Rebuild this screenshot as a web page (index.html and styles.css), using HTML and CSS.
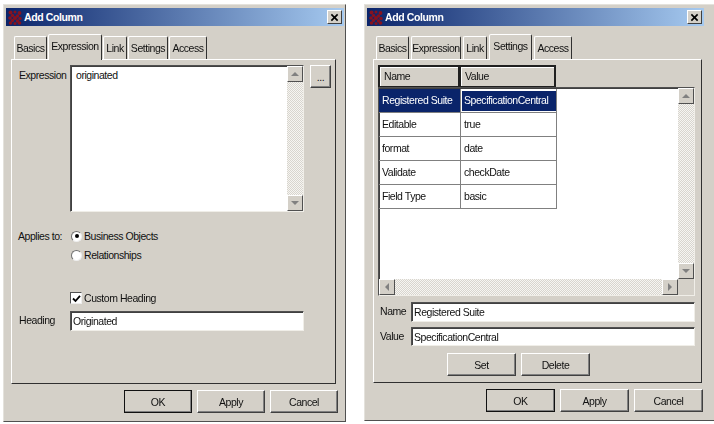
FILE: index.html
```html
<!DOCTYPE html>
<html lang="en">
<head>
<meta charset="utf-8">
<title>Add Column</title>
<link rel="stylesheet" href="styles.css">
</head>
<body>
<main class="desktop">
  <section class="window window-a">
    <header class="titlebar">
      <svg class="app-icon" viewBox="0 0 14 15"><g fill="#86121f"><circle cx="2.5" cy="2.5" r="2"/><circle cx="7" cy="2" r="1.5"/><circle cx="11.5" cy="3" r="1.9"/><circle cx="4.5" cy="5.5" r="1.7"/><circle cx="9.5" cy="6" r="1.7"/><circle cx="2" cy="8" r="1.8"/><circle cx="7" cy="8" r="2"/><circle cx="12" cy="8.5" r="1.7"/><circle cx="4.5" cy="10.5" r="1.7"/><circle cx="9.5" cy="11" r="1.7"/><circle cx="2.5" cy="13" r="1.8"/><circle cx="7" cy="13.5" r="1.5"/><circle cx="11.5" cy="13" r="1.8"/></g></svg>
      <span class="title-text">Add Column</span>
      <button class="close" aria-label="Close"><svg viewBox="0 0 10 9"><path d="M1.5 1l7 7M8.5 1l-7 7" stroke="#000" stroke-width="1.8" fill="none"/></svg></button>
    </header>
    <nav class="tabs">
      <span class="tab t-basics">Basics</span>
      <span class="tab t-expression active">Expression</span>
      <span class="tab t-link">Link</span>
      <span class="tab t-settings">Settings</span>
      <span class="tab t-access">Access</span>
    </nav>
    <div class="panel panel-expression">
      <div class="row expr-row">
        <label class="field-label">Expression</label>
        <div class="sunken textarea">
          <div class="area-text">originated</div>
          <div class="vscroll">
            <span class="sb-btn"><i class="arrow up"></i></span>
            <span class="track"></span>
            <span class="sb-btn"><i class="arrow down"></i></span>
          </div>
        </div>
        <button class="btn dots">...</button>
      </div>
      <div class="row applies-row">
        <span class="field-label">Applies to:</span>
        <div class="radios">
          <div class="option"><span class="radio checked"></span>Business Objects</div>
          <div class="option"><span class="radio"></span>Relationships</div>
        </div>
      </div>
      <div class="row custom-row">
        <span class="field-label"></span>
        <div class="option"><span class="check"><svg viewBox="0 0 9 9"><path d="M1 4.5l2.5 2.5L8 1.8" stroke="#000" stroke-width="1.8" fill="none"/></svg></span>Custom Heading</div>
      </div>
      <div class="row heading-row">
        <span class="field-label">Heading</span>
        <div class="sunken input heading-input">Originated</div>
      </div>
    </div>
    <footer class="actions">
      <button class="btn action default">OK</button>
      <button class="btn action">Apply</button>
      <button class="btn action">Cancel</button>
    </footer>
  </section>

  <section class="window window-b">
    <header class="titlebar">
      <svg class="app-icon" viewBox="0 0 14 15"><g fill="#86121f"><circle cx="2.5" cy="2.5" r="2"/><circle cx="7" cy="2" r="1.5"/><circle cx="11.5" cy="3" r="1.9"/><circle cx="4.5" cy="5.5" r="1.7"/><circle cx="9.5" cy="6" r="1.7"/><circle cx="2" cy="8" r="1.8"/><circle cx="7" cy="8" r="2"/><circle cx="12" cy="8.5" r="1.7"/><circle cx="4.5" cy="10.5" r="1.7"/><circle cx="9.5" cy="11" r="1.7"/><circle cx="2.5" cy="13" r="1.8"/><circle cx="7" cy="13.5" r="1.5"/><circle cx="11.5" cy="13" r="1.8"/></g></svg>
      <span class="title-text">Add Column</span>
      <button class="close" aria-label="Close"><svg viewBox="0 0 10 9"><path d="M1.5 1l7 7M8.5 1l-7 7" stroke="#000" stroke-width="1.8" fill="none"/></svg></button>
    </header>
    <nav class="tabs">
      <span class="tab t-basics">Basics</span>
      <span class="tab t-expression">Expression</span>
      <span class="tab t-link">Link</span>
      <span class="tab t-settings active">Settings</span>
      <span class="tab t-access">Access</span>
    </nav>
    <div class="panel panel-settings">
      <div class="col-heads">
        <span class="col-head col-name">Name</span>
        <span class="col-head col-value">Value</span>
      </div>
      <div class="sunken listbox">
        <div class="list-main">
          <div class="rows">
            <div class="list-row selected"><span class="cell col-name">Registered Suite</span><span class="cell col-value"><span class="focus">SpecificationCentral</span></span></div>
            <div class="list-row"><span class="cell col-name">Editable</span><span class="cell col-value">true</span></div>
            <div class="list-row"><span class="cell col-name">format</span><span class="cell col-value">date</span></div>
            <div class="list-row"><span class="cell col-name">Validate</span><span class="cell col-value">checkDate</span></div>
            <div class="list-row"><span class="cell col-name">Field Type</span><span class="cell col-value">basic</span></div>
          </div>
          <div class="vscroll">
            <span class="sb-btn"><i class="arrow up"></i></span>
            <span class="track"></span>
            <span class="sb-btn"><i class="arrow down"></i></span>
          </div>
        </div>
        <div class="hscroll">
          <span class="sb-btn"><i class="arrow left"></i></span>
          <span class="track"></span>
          <span class="sb-btn"><i class="arrow right"></i></span>
          <span class="corner"></span>
        </div>
      </div>
      <div class="row name-row">
        <span class="short-label">Name</span>
        <div class="sunken input">Registered Suite</div>
      </div>
      <div class="row value-row">
        <span class="short-label">Value</span>
        <div class="sunken input">SpecificationCentral</div>
      </div>
      <div class="set-row">
        <button class="btn action">Set</button>
        <button class="btn action">Delete</button>
      </div>
    </div>
    <footer class="actions">
      <button class="btn action default">OK</button>
      <button class="btn action">Apply</button>
      <button class="btn action">Cancel</button>
    </footer>
  </section>
</main>
</body>
</html>
```
FILE: styles.css
```css
* { box-sizing: border-box; }
html, body { margin: 0; background: #fff; }
body {
  width: 714px;
  height: 424px;
  overflow: hidden;
  font-family: "Liberation Sans", sans-serif;
  font-size: 10.5px;
  letter-spacing: -0.45px;
  color: #111;
}
.desktop {
  display: flex;
  gap: 18px;
  padding: 4px 0 0 3px;
  align-items: flex-start;
  filter: blur(0.35px);
}
.window {
  background: #d4d0c8;
  border: 1px solid;
  border-color: #e4e2dc #505050 #505050 #e4e2dc;
  padding: 3px 2px 0;
  flex: none;
}
.window-a { width: 343px; height: 418px; }
.window-b { width: 352px; height: 417px; }
.titlebar {
  display: flex;
  align-items: center;
  height: 18px;
  padding: 0 2px;
  background: linear-gradient(90deg, #0a246a, #a6caf0);
  color: #fff;
  font-weight: 700;
  font-size: 10.5px;
  letter-spacing: -0.4px;
}
.window-a .titlebar { width: 338px; }
.window-b .titlebar { width: 337px; }
.app-icon { width: 14px; height: 15px; flex: none; margin-right: 2px; }
.title-text { flex: 1; }
.close {
  width: 15px;
  height: 14px;
  padding: 1px 2px;
  background: #d4d0c8;
  border: 1px solid;
  border-color: #fff #404040 #404040 #fff;
  display: flex;
  align-items: center;
  justify-content: center;
}
.close svg { width: 10px; height: 9px; display: block; }
.tabs {
  display: flex;
  align-items: flex-end;
  height: 33px;
  padding-left: 8px;
  position: relative;
  z-index: 1;
}
.tab {
  height: 23px;
  padding-top: 5px;
  margin-right: 1px;
  text-align: center;
  border: 1px solid;
  border-bottom: 0;
  border-color: #fff #303030 transparent #fff;
  border-radius: 2px 2px 0 0;
}
.t-basics { width: 33px; }
.t-expression { width: 50px; }
.t-link { width: 24px; }
.t-settings { width: 40px; }
.t-access { width: 38px; }
.tab.active {
  height: 26px;
  margin-bottom: -1px;
  background: #d4d0c8;
}
.t-expression.active { width: 54px; }
.t-settings.active { width: 43px; }
.window-b .tabs { padding-left: 9px; }
.window-b .tab { margin-right: 2px; }
.panel {
  border: 1px solid;
  border-color: #fff #303030 #303030 #fff;
  height: 325px;
  padding: 5px 0 0 7px;
}
.window-a .panel { width: 325px; margin-left: 5px; }
.window-b .panel { width: 329px; margin-left: 6px; height: 324px; padding-left: 4px; }
.row { display: flex; }
.field-label { width: 51px; flex: none; white-space: nowrap; }
.applies-row .field-label { margin-left: -1px; width: 52px; }
.expr-row { height: 147px; }
.expr-row .field-label { padding-top: 4px; }
.sunken {
  background: #fff;
  border: 1px solid;
  border-color: #505050 #f0eee8 #f0eee8 #505050;
  box-shadow: inset 1px 1px 0 #404040;
}
.textarea {
  width: 234px;
  height: 147px;
  display: flex;
}
.area-text { flex: 1; padding: 3px 0 0 5px; }
.vscroll {
  width: 16px;
  flex: none;
  display: flex;
  flex-direction: column;
}
.track {
  flex: 1;
  background: repeating-conic-gradient(#d8d5ce 0 25%, #f6f5f2 0 50%) 0 0 / 2px 2px;
}
.sb-btn {
  width: 16px;
  height: 16px;
  flex: none;
  background: #d4d0c8;
  border: 1px solid;
  border-color: #fff #505050 #505050 #fff;
  display: flex;
  align-items: center;
  justify-content: center;
}
.arrow { width: 0; height: 0; border: 4px solid transparent; display: block; }
.arrow.up { border-bottom-color: #808080; border-top-width: 0; }
.arrow.down { border-top-color: #808080; border-bottom-width: 0; }
.arrow.left { border-right-color: #808080; border-left-width: 0; }
.arrow.right { border-left-color: #808080; border-right-width: 0; }
.btn {
  font: inherit;
  letter-spacing: inherit;
  color: #111;
  background: #d4d0c8;
  border: 1px solid;
  border-color: #fff #404040 #404040 #fff;
  box-shadow: inset -1px -1px 0 #808080;
  padding: 0;
}
.dots { width: 21px; height: 23px; margin-left: 6px; }
.applies-row { margin-top: 17px; }
.applies-row .field-label { padding-top: 1px; }
.radios { display: flex; flex-direction: column; gap: 5px; }
.option { display: flex; align-items: center; height: 14px; white-space: nowrap; margin-left: 1px; }
.radio {
  width: 11px;
  height: 11px;
  border-radius: 50%;
  background: #fff;
  border: 1px solid #707070;
  border-right-color: #eee;
  border-bottom-color: #eee;
  margin-right: 2px;
  display: flex;
  align-items: center;
  justify-content: center;
}
.radio.checked::after { content: ""; width: 4px; height: 4px; border-radius: 50%; background: #000; }
.custom-row { margin-top: 29px; }
.custom-row .option { margin-left: 0; }
.check {
  width: 12px;
  height: 12px;
  background: #fff;
  border: 1px solid #505050;
  border-right-color: #eee;
  border-bottom-color: #eee;
  margin-right: 2px;
  padding: 1px;
}
.check svg { display: block; width: 9px; height: 9px; }
.heading-row { margin-top: 6px; align-items: flex-start; }
.heading-row .field-label { padding-top: 3px; }
.input { height: 20px; line-height: 18px; padding-left: 2px; flex: 1; }
.heading-input { flex: none; width: 234px; }
.actions {
  display: flex;
  justify-content: flex-end;
  gap: 5px;
  margin-top: 6px;
}
.window-a .actions { width: 338px; padding-right: 6px; }
.window-b .actions { width: 337px; padding-right: 1px; }
.action { width: 68px; height: 23px; }
.default { outline: 1px solid #111; outline-offset: -1px; }
.col-heads { display: flex; height: 22px; width: 178px; }
.col-name { width: 82px; flex: none; }
.col-value { width: 96px; flex: none; }
.col-head {
  border: 2px solid #202020;
  border-left-width: 1px;
  border-bottom-width: 1px;
  padding: 3px 0 0 4px;
  background: #d4d0c8;
  box-shadow: inset 1px 1px 0 #fff;
}
.col-name.col-head { border-left-width: 2px; }
.listbox {
  width: 317px;
  height: 209px;
  display: flex;
  flex-direction: column;
}
.list-main { flex: 1; display: flex; min-height: 0; }
.rows { flex: 1; padding-top: 1px; }
.list-row { display: flex; height: 24px; width: 178px; }
.cell {
  padding: 5px 0 0 3px;
  border-right: 1px solid #808080;
  border-bottom: 1px solid #808080;
  white-space: nowrap;
}
.cell.col-value { padding-left: 3px; }
.selected .col-name { background: #0a246a; color: #fff; }
.selected .cell.col-value { padding: 2px 0 0 1px; }
.focus { display: block; height: 20px; padding: 3px 0 0 2px; background: #0a246a; color: #fff; }
.hscroll { display: flex; height: 16px; flex: none; }
.corner { width: 16px; flex: none; background: #d4d0c8; }
.short-label { width: 33px; flex: none; padding-top: 3px; padding-left: 2px; }
.name-row { margin-top: 6px; width: 317px; }
.value-row { margin-top: 5px; width: 317px; }
.value-row .input { height: 19px; }
.set-row { display: flex; gap: 5px; margin: 7px 0 0 69px; }
.set-row .action { width: 69px; height: 23px; }
.window-b .action.btn { width: 69px; }
```
